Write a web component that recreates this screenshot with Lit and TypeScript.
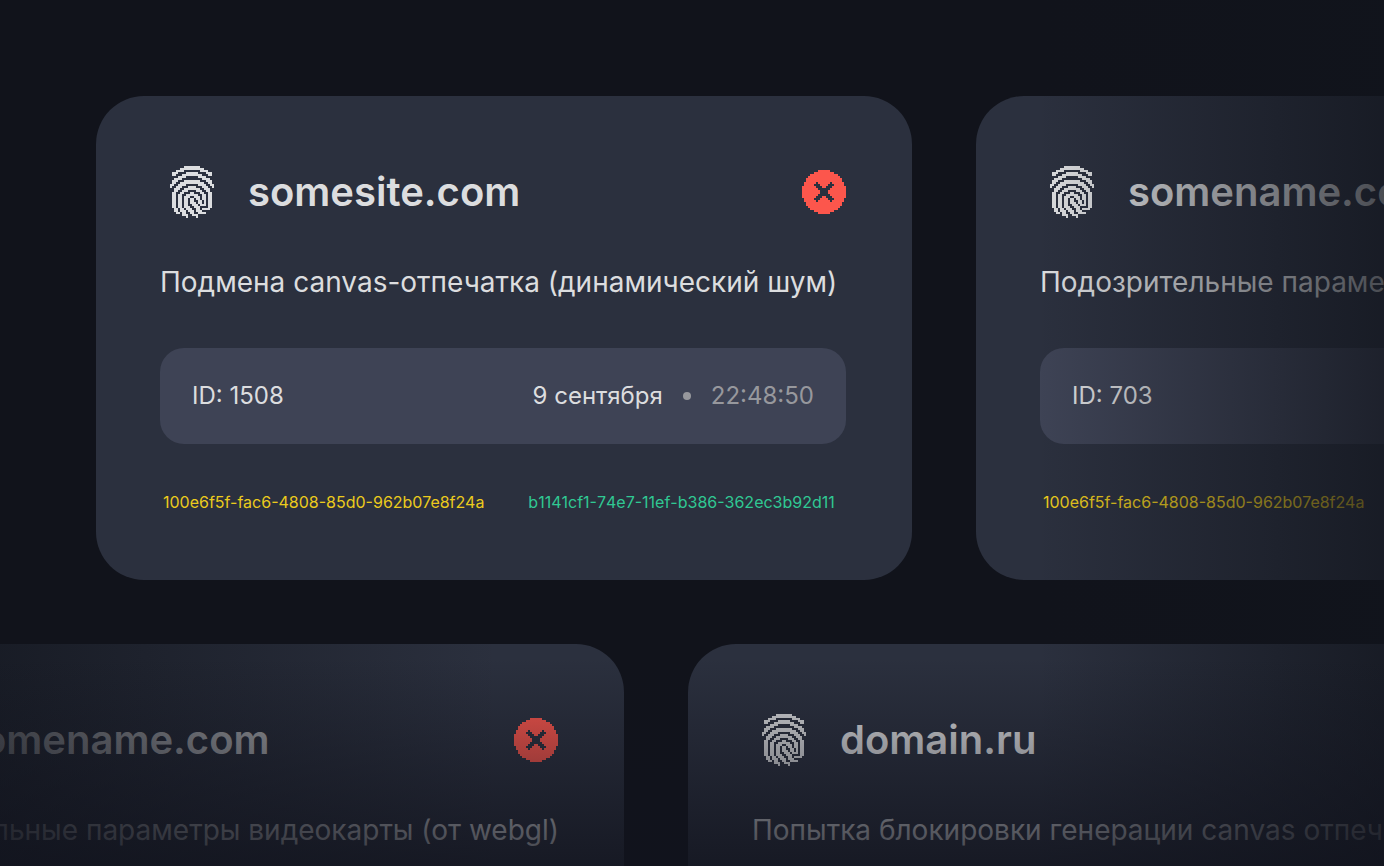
import { LitElement, html, svg, css } from "lit";
import { customElement, property } from "lit/decorators.js";

interface Alert {
  site: string;
  reason: string;
  id: number;
  date: string;
  time: string;
  first: string;
  second: string;
}

const FINGERPRINT = [
  ".......########.......",
  ".....############.....",
  "...####........####...",
  ".###....######....###.",
  ".##...##########...##.",
  "....####......####....",
  "..####..........####..",
  ".###...########...###.",
  ".##..############..##.",
  "##..####......####..##",
  "#..###...####...###..#",
  "..###..########..###..",
  "..##..###....###..##..",
  ".##..##...##...##..##.",
  ".##.##..######..##.##.",
  ".##.##.###..###.##.##.",
  ".##.##.##.##.##.##.##.",
  ".##.##.##.##..##.#.##.",
  ".##.##.##.###.##.#.##.",
  ".##.##.##..###.###.##.",
  ".##.##.###..###....##.",
  "..##.##.###..##.####..",
  "..##.###.###.###......",
  "...##.##..##..####....",
  "......###..###........",
  "........#....#........",
];

const CROSS = [
  "........######........",
  "......##########......",
  "....##############....",
  "...################...",
  "..##################..",
  "..##################..",
  ".######.######.######.",
  ".#####...####...#####.",
  "#######...##...#######",
  "########......########",
  "#########....#########",
  "#########....#########",
  "########......########",
  "#######...##...#######",
  ".#####...####...#####.",
  ".######.######.######.",
  "..##################..",
  "..##################..",
  "...################...",
  "....##############....",
  "......##########......",
  "........######........",
];

/** Turns a bitmap into one path made of horizontal runs. */
const toPath = (rows: string[]): string =>
  rows
    .map((row, y) =>
      [...row.matchAll(/#+/g)]
        .map((run) => `M${run.index} ${y}h${run[0].length}v1h-${run[0].length}z`)
        .join("")
    )
    .join("");

const pixelIcon = (rows: string[]) => html`
  <svg
    width=${rows[0].length * 2}
    height=${rows.length * 2}
    viewBox="0 0 ${rows[0].length} ${rows.length}"
    shape-rendering="crispEdges"
    aria-hidden="true"
  >
    ${svg`<path fill="currentColor" d=${toPath(rows)}></path>`}
  </svg>
`;

@customElement("alert-card")
export class AlertCard extends LitElement {
  @property({ attribute: false }) alert!: Alert;

  static styles = css`
    :host {
      display: block;
      box-sizing: border-box;
      flex: none;
      width: 816px;
      padding: 64px 66px 68px 64px;
      border-radius: 48px;
      background: #2b303e;
      color: #dcdddf;
      white-space: nowrap;
    }
    .head {
      display: flex;
      align-items: center;
      gap: 24px;
    }
    .mark {
      display: grid;
      place-items: center;
      width: 64px;
      height: 64px;
    }
    svg {
      display: block;
    }
    .site {
      flex: 1;
      margin: 0;
      font-size: 40px;
      line-height: 48px;
      font-weight: 600;
    }
    .dismiss {
      padding: 0;
      border: 0;
      background: none;
      color: #fc564c;
      cursor: pointer;
    }
    .reason {
      margin: 40px 0 48px;
      font-size: 28px;
      line-height: 36px;
    }
    .meta {
      display: flex;
      align-items: center;
      gap: 20px;
      padding: 32px;
      border-radius: 24px;
      background: #3e4355;
      font-size: 24px;
      line-height: 32px;
    }
    .id {
      flex: 1;
    }
    .dot {
      width: 8px;
      height: 8px;
      border-radius: 50%;
      background: #97989d;
    }
    .time {
      color: #97989d;
    }
    .hashes {
      display: flex;
      gap: 44px;
      margin-top: 48px;
      padding: 0 3px;
      font-size: 16px;
      line-height: 20px;
    }
    .first {
      color: #eccb1c;
    }
    .second {
      color: #30c893;
      font-kerning: none;
    }
  `;

  render() {
    const a = this.alert;
    return html`
      <div class="head">
        <span class="mark">${pixelIcon(FINGERPRINT)}</span>
        <h2 class="site">${a.site}</h2>
        <button class="dismiss" type="button" aria-label="Закрыть">${pixelIcon(CROSS)}</button>
      </div>
      <p class="reason">${a.reason}</p>
      <div class="meta">
        <span class="id">ID: ${a.id}</span>
        <span>${a.date}</span>
        <span class="dot"></span>
        <time class="time">${a.time}</time>
      </div>
      <div class="hashes">
        <span class="first">${a.first}</span>
        <span class="second">${a.second}</span>
      </div>
    `;
  }
}

const base = {
  date: "9 сентября",
  time: "22:48:50",
  first: "100e6f5f-fac6-4808-85d0-962b07e8f24a",
  second: "b1141cf1-74e7-11ef-b386-362ec3b92d11",
};

const TOP: Alert[] = [
  { ...base, site: "somesite.com", reason: "Подмена canvas-отпечатка (динамический шум)", id: 1508 },
  { ...base, site: "somename.com", reason: "Подозрительные параметры видеокарты", id: 703 },
];

const BOTTOM: Alert[] = [
  { ...base, site: "somename.com", reason: "Сомнительные параметры видеокарты (от webgl)", id: 703 },
  { ...base, site: "domain.ru", reason: "Попытка блокировки генерации canvas отпечатка", id: 1509 },
];

@customElement("app-root")
export class AppRoot extends LitElement {
  static styles = css`
    :host {
      display: block;
      position: relative;
      box-sizing: border-box;
      height: 100vh;
      overflow: hidden;
      padding-top: 96px;
      background: #11131b;
      font-family: Inter, "Noto Sans", sans-serif;
    }
    .wall {
      display: grid;
      gap: 64px;
    }
    .row {
      display: flex;
      gap: 64px;
      padding-left: 96px;
    }
    .shifted {
      position: relative;
      padding-left: 0;
      margin-left: -192px;
    }
    .shifted::after {
      content: "";
      position: absolute;
      inset: 0 auto 0 192px;
      width: 36vw;
      background: linear-gradient(to left, #11141c00, #11141cb4);
      pointer-events: none;
    }
    .fade-right,
    .fade-bottom {
      position: absolute;
      inset: 0;
      pointer-events: none;
    }
    .fade-right {
      left: auto;
      width: 25vw;
      background: linear-gradient(to right, #11141c00, #11141cb8);
    }
    .fade-bottom {
      top: auto;
      height: 208px;
      background: linear-gradient(to bottom, #11131d00, #11131dc8);
    }
  `;

  render() {
    return html`
      <main class="wall">
        <div class="row">${TOP.map((a) => html`<alert-card .alert=${a}></alert-card>`)}</div>
        <div class="row shifted">${BOTTOM.map((a) => html`<alert-card .alert=${a}></alert-card>`)}</div>
      </main>
      <div class="fade-right"></div>
      <div class="fade-bottom"></div>
    `;
  }
}
